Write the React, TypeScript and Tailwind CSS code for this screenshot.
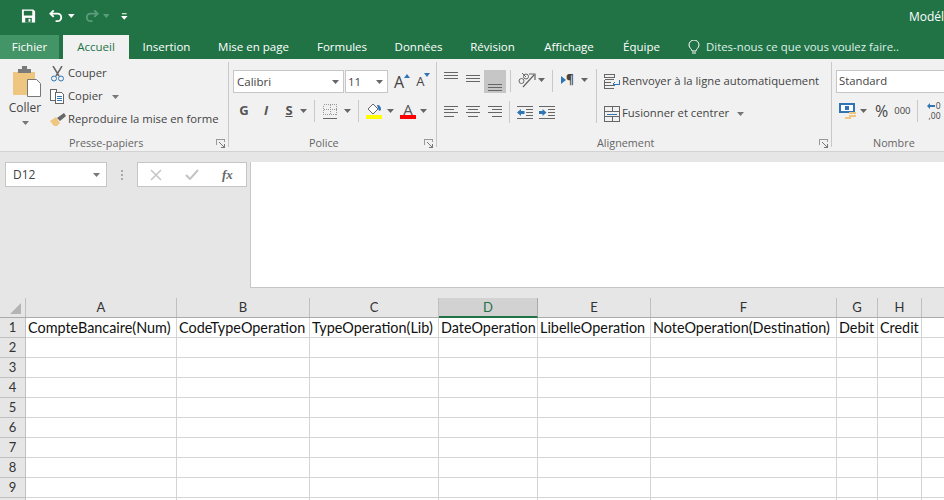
import React from "react";

const Caret = ({ c = "#666", className = "" }: { c?: string; className?: string }) => (
  <svg width="7" height="4" viewBox="0 0 7 4" className={className}><path d="M0 0h7L3.5 4z" fill={c} /></svg>
);
const Lines = ({ d, w = 14, h = 14, className = "" }: { d: string; w?: number; h?: number; className?: string }) => (
  <svg width={w} height={h} viewBox={`0 0 ${w} ${h}`} className={className} shapeRendering="crispEdges"><path d={d} stroke="#666" fill="none" /></svg>
);
const VSep = ({ className = "" }: { className?: string }) => <div className={`w-px bg-[#c8c8c8] ${className}`} />;

const Launcher = () => (
  <svg width="9" height="9" viewBox="0 0 9 9" shapeRendering="crispEdges">
    <path d="M.5 6V.5H8.5V3" stroke="#999" fill="none" /><path d="M3 3l5 5M5 8h3V5" stroke="#777" fill="none" />
  </svg>
);

const tabs = [
  ["Insertion", "w-[75px]"],
  ["Mise en page", "w-[99px]"],
  ["Formules", "w-[78px]"],
  ["Données", "w-[75px]"],
  ["Révision", "w-[73px]"],
  ["Affichage", "w-[80px]"],
  ["Équipe", "w-[65px]"],
];

const colHeads = [
  ["A", "w-[151px]", "CompteBancaire(Num)"],
  ["B", "w-[133px]", "CodeTypeOperation"],
  ["C", "w-[129px]", "TypeOperation(Lib)"],
  ["D", "w-[99px]", "DateOperation"],
  ["E", "w-[113px]", "LibelleOperation"],
  ["F", "w-[186px]", "NoteOperation(Destination)"],
  ["G", "w-[41px]", "Debit"],
  ["H", "w-[44px]", "Credit"],
  ["", "w-[40px]", ""],
];
const rows = [1, 2, 3, 4, 5, 6, 7, 8, 9, 10];

export default function App() {
  return (
    <div className="w-[944px] h-[500px] overflow-hidden bg-white font-['Open_Sans',sans-serif] text-[11.3px] text-[#444]">
      {/* title bar */}
      <div className="h-[34px] bg-[#217346] flex items-center">
        <svg width="16" height="16" viewBox="0 0 16 16" className="ml-[21px] mt-[-3px]">
          <path d="M1 1h12l2 2v12H1z" fill="#fff" /><path d="M3 2.500h9v5H3z" fill="#217346" /><path d="M4.500 10h7v5h-7z" fill="#217346" /><path d="M8 11h2v3H8z" fill="#fff" />
        </svg>
        <svg width="16" height="14" viewBox="0 0 16 14" className="ml-[13px] mt-[-3px]">
          <path d="M5 1L1.500 4.500 5 8M2 4.500h7a4 4 0 0 1 0 8H7" stroke="#fff" strokeWidth="2" fill="none" />
        </svg>
        <Caret c="#fff" className="ml-[4px] mt-[-2px]" />
        <svg width="16" height="14" viewBox="0 0 16 14" className="ml-[9px] mt-[-3px]">
          <path d="M11 1l3.500 3.500L11 8M14 4.500H7a4 4 0 0 0 0 8h2" stroke="#5c9c7c" strokeWidth="2" fill="none" />
        </svg>
        <Caret c="#5c9c7c" className="ml-[4px] mt-[-2px]" />
        <svg width="7" height="7" viewBox="0 0 7 7" className="ml-[12px] mt-[-1px]"><path d="M1 0h5v1H1zM0 3h7L3.500 7z" fill="#fff" /></svg>
        <span className="ml-[781px] mt-[-1px] text-white text-[12px] whitespace-nowrap">Modél</span>
      </div>
      {/* tabs */}
      <div className="h-[25px] bg-[#217346] flex items-end text-white text-[11.5px] whitespace-nowrap">
        <div className="w-[59px] h-[24px] bg-[#439467] flex items-center justify-center">Fichier</div>
        <div className="ml-[4px] w-[66px] h-[24px] bg-[#f1f1f1] text-[#217346] flex items-center justify-center">Accueil</div>
        {tabs.map(([t, w]) => (
          <div key={t} className={`${w} h-[24px] flex items-center justify-center`}>{t}</div>
        ))}
        <div className="h-[24px] flex items-center pl-[14px]">
          <svg width="12" height="15" viewBox="0 0 12 15"><path d="M4 11c0-2-3-3-3-6a5 5 0 0 1 10 0c0 3-3 4-3 6zM4 13h4" stroke="#fff" fill="none" /></svg>
          <span className="ml-[6px] text-[11.400px] text-[#dff0e6]">Dites-nous ce que vous voulez faire..</span>
        </div>
      </div>
      {/* ribbon */}
      <div className="h-[93px] bg-[#f1f1f1] border-b border-[#d2d2d2] flex whitespace-nowrap">
        {/* clipboard */}
        <div className="w-[228px] flex flex-col shrink-0">
          <div className="h-[74px] flex">
            <div className="w-[50px] flex flex-col items-center">
              <svg width="29" height="31" viewBox="0 0 29 31" className="mt-[7px] ml-[4px]">
                <path d="M0 6h22v23H0z" fill="#eec67f" /><path d="M5 3h4V0h5v3h4v4H5z" fill="#7a7a7a" />
                <path d="M14.500 13.500h9l4 4v13h-13z" fill="#fff" stroke="#777" />
              </svg>
              <span className="mt-[3px] text-[12px] leading-[16px]">Coller</span>
              <Caret c="#777" className="mt-[5px]" />
            </div>
            <div className="flex flex-col pt-[3px]">
              <div className="h-[23px] flex items-center">
                <svg width="15" height="16" viewBox="0 0 15 16">
                  <path d="M3 0l6 10M12 0L6 10" stroke="#666" strokeWidth="1.500" />
                  <circle cx="4" cy="12.500" r="2.500" stroke="#2f75b5" fill="none" /><circle cx="11" cy="12.500" r="2.500" stroke="#2f75b5" fill="none" />
                </svg>
                <span className="ml-[3px]">Couper</span>
              </div>
              <div className="h-[23px] flex items-center">
                <svg width="15" height="15" viewBox="0 0 15 15" shapeRendering="crispEdges">
                  <path d="M.5.5h6v11h-6z" fill="#fff" stroke="#666" /><path d="M5.500 3.500h6l2 2v9h-8z" fill="#fff" stroke="#666" />
                  <path d="M7 7h5M7 9h5M7 11h5" stroke="#2f75b5" />
                </svg>
                <span className="ml-[3px]">Copier</span>
                <Caret c="#777" className="ml-[9px]" />
              </div>
              <div className="h-[23px] flex items-center">
                <svg width="16" height="14" viewBox="0 0 16 14"><path d="M0 8l6-4 4 6-3 3H4z" fill="#eec67f" /><path d="M7 5l7-5 2 3-6 5z" fill="#666" /></svg>
                <span className="ml-[2px]">Reproduire la mise en forme</span>
              </div>
            </div>
          </div>
          <div className="flex items-center h-[18px] pt-[2px] pl-[69px] pr-[3px]">
            <span className="text-[#666] text-[10.800px]">Presse-papiers</span>
            <span className="ml-auto flex"><Launcher /></span>
          </div>
        </div>
        <VSep className="h-[85px] mt-[3px] shrink-0" />
        {/* police */}
        <div className="w-[207px] shrink-0 flex flex-col pl-[4px]">
          <div className="h-[74px] flex flex-col pt-[11px]">
            <div className="flex items-center h-[23px]">
              <div className="w-[111px] h-[23px] bg-white border border-[#c6c6c6] flex items-center pl-[3px] pr-[4px] justify-between text-[11.500px]">
                <span>Calibri</span><Caret />
              </div>
              <div className="ml-px w-[43px] h-[23px] bg-white border border-[#c6c6c6] flex items-center pl-[2px] pr-[4px] justify-between text-[11.500px]">
                <span>11</span><Caret />
              </div>
              <span className="ml-[6px] relative text-[16px] leading-none">A<svg width="6" height="4" viewBox="0 0 6 4" className="absolute top-0 left-[10px]"><path d="M0 4h6L3 0z" fill="#2f75b5" /></svg></span>
              <span className="ml-[12px] relative text-[13px] leading-none">A<svg width="6" height="4" viewBox="0 0 6 4" className="absolute top-[-2px] left-[8px]"><path d="M0 0h6L3 4z" fill="#2f75b5" /></svg></span>
            </div>
            <div className="flex items-center h-[24px] mt-[6px]">
              <span className="ml-[5px] font-bold text-[13px] w-[12px] text-center text-[#555]">G</span>
              <span className="ml-[11px] italic font-bold text-[13px] w-[10px] text-center text-[#555]">I</span>
              <span className="ml-[13px] font-bold text-[13px] w-[10px] text-center underline text-[#555]">S</span>
              <Caret className="ml-[6px]" />
              <VSep className="h-[22px] ml-[7px]" />
              <svg width="14" height="15" viewBox="0 0 14 15" className="ml-[8px]" shapeRendering="crispEdges">
                <path d="M.5.5h13v10h-13zM7 .5v10M.5 5.500h13" stroke="#999" strokeDasharray="1 1" fill="none" /><path d="M0 14h14" stroke="#666" />
              </svg>
              <Caret className="ml-[7px]" />
              <VSep className="h-[22px] ml-[7px]" />
              <div className="ml-[7px] flex flex-col items-center w-[16px]">
                <svg width="16" height="12" viewBox="0 0 16 12"><path d="M2 6l5-5 5 5-5 5z" fill="#fff" stroke="#666" /><path d="M11 2c3 0 4 2 4 5l-2 1z" fill="#2f75b5" /></svg>
                <div className="w-[16px] h-[4px] bg-[#ffff00]" />
              </div>
              <Caret className="ml-[5px]" />
              <div className="ml-[6px] flex flex-col items-center w-[16px]">
                <span className="text-[15px] leading-[12px] text-[#555]">A</span>
                <div className="w-[16px] h-[4px] bg-[#ff0000]" />
              </div>
              <Caret className="ml-[4px]" />
            </div>
          </div>
          <div className="flex items-center h-[18px] pt-[2px] pr-[3px]">
            <span className="ml-[76px] text-[#666] text-[10.800px]">Police</span>
            <span className="ml-auto flex"><Launcher /></span>
          </div>
        </div>
        <VSep className="h-[85px] mt-[3px] shrink-0" />
        {/* alignement */}
        <div className="w-[394px] shrink-0 flex flex-col">
          <div className="h-[74px] flex">
            <div className="w-[159px] flex flex-col pt-[11px] pl-[7px]">
              <div className="flex items-start h-[23px]">
                <Lines className="mt-[2px]" d="M0 .5h14M0 3.500h14M0 6.500h14" />
                <Lines className="ml-[8px] mt-[5px]" d="M0 .5h14M0 3.500h14M0 6.500h14" />
                <div className="ml-[4px] w-[22px] h-[23px] bg-[#c6c6c6] flex items-end justify-center pb-[2px]">
                  <Lines h={7} d="M0 .5h14M0 3.500h14M0 6.500h14" />
                </div>
                <VSep className="h-[22px] ml-[4px]" />
                <svg width="18" height="16" viewBox="0 0 18 16" className="ml-[7px] mt-[2px]">
                  <path d="M5 15L16 3M11 2h6v6" stroke="#666" fill="none" strokeWidth="1.200" />
                  <circle cx="3.500" cy="9" r="2.500" fill="none" stroke="#666" /><circle cx="8" cy="4.500" r="2.500" fill="none" stroke="#666" /><path d="M4 1l4 4" stroke="#666" />
                </svg>
                <Caret className="ml-[2px] mt-[8px]" />
                <VSep className="h-[22px] ml-[7px]" />
                <span className="ml-[8px] flex items-center h-[20px] text-[12px] font-bold leading-none">
                  <svg width="5" height="8" viewBox="0 0 5 8"><path d="M0 0l5 4-5 4z" fill="#2f75b5" /></svg>¶
                </span>
                <Caret className="ml-[7px] mt-[8px]" />
              </div>
              <div className="flex items-center h-[14px] mt-[12px]">
                <Lines h={12} d="M0 .5h14M0 3.500h10M0 6.500h14M0 10.500h10" />
                <Lines h={12} className="ml-[8px]" d="M0 .5h14M2 3.500h10M0 6.500h14M2 10.500h10" />
                <Lines h={12} className="ml-[8px]" d="M0 .5h14M4 3.500h10M0 6.500h14M4 10.500h10" />
                <VSep className="h-[22px] ml-[7px]" />
                <svg width="16" height="13" viewBox="0 0 16 13" className="ml-[7px]">
                  <path d="M0 .5h16M9 3.500h7M9 6.500h7M9 9.500h7M0 12.500h16" stroke="#666" /><path d="M0 6.500l4-3.500v2h3.500v3H4v2z" fill="#2f75b5" />
                </svg>
                <svg width="16" height="13" viewBox="0 0 16 13" className="ml-[6px]">
                  <path d="M0 .5h16M9 3.500h7M9 6.500h7M9 9.500h7M0 12.500h16" stroke="#666" /><path d="M7.500 6.500l-4-3.500v2H0v3h3.500v2z" fill="#2f75b5" />
                </svg>
              </div>
            </div>
            <VSep className="h-[54px] mt-[10px]" />
            <div className="flex flex-col pt-[11px] pl-[7px]">
              <div className="h-[23px] flex items-center">
                <svg width="16" height="15" viewBox="0 0 16 15" shapeRendering="crispEdges">
                  <path d="M.5.5h10v3H.5zM.5 5.500h9M.5 8.500h6M.5 11.500h9M.5 5.500v9h9" stroke="#666" fill="none" /><path d="M15 6v4H9M11 8l-2 2 2 2" stroke="#2f75b5" fill="none" />
                </svg>
                <span className="ml-[2px]">Renvoyer à la ligne automatiquement</span>
              </div>
              <div className="h-[23px] flex items-center mt-[9px]">
                <svg width="16" height="16" viewBox="0 0 16 16" shapeRendering="crispEdges">
                  <path d="M.5.5h15v15H.5zM.5 5.500h15M.5 10.500h15M8 .5v5M8 10.500v5" stroke="#666" fill="none" /><path d="M3 8h10" stroke="#2f75b5" />
                </svg>
                <span className="ml-[2px]">Fusionner et centrer</span>
                <Caret className="ml-[8px]" c="#777" />
              </div>
            </div>
          </div>
          <div className="flex items-center h-[18px] pt-[2px] pr-[3px]">
            <span className="ml-[160px] text-[#666] text-[10.800px]">Alignement</span>
            <span className="ml-auto flex"><Launcher /></span>
          </div>
        </div>
        <VSep className="h-[85px] mt-[3px] shrink-0" />
        {/* nombre */}
        <div className="flex-1 flex flex-col pl-[4px] overflow-hidden">
          <div className="h-[74px] flex flex-col pt-[11px]">
            <div className="w-[120px] h-[23px] bg-white border border-[#c6c6c6] flex items-center pl-[2px] shrink-0">Standard</div>
            <div className="flex items-center h-[24px] mt-[6px]">
              <svg width="17" height="16" viewBox="0 0 17 16" className="ml-[3px]" shapeRendering="crispEdges">
                <path d="M0 0h16v10H0z" fill="#2f75b5" /><path d="M2 2h12v6H2z" fill="#fff" /><path d="M6 3h4v4H6z" fill="#2f75b5" /><path d="M10 9h7v2h-7zM10 12h7v2h-7zM6 14h6v2H6z" fill="#eec67f" />
              </svg>
              <Caret className="ml-[4px]" />
              <span className="ml-[8px] text-[16px] leading-none">%</span>
              <span className="ml-[6px] text-[9.500px]">000</span>
              <VSep className="h-[22px] ml-[6px]" />
              <div className="ml-[7px] flex flex-col items-end w-[16px] text-[8.500px]">
                <div className="h-[10px] leading-[10px] flex items-center">
                  <svg width="8" height="6" viewBox="0 0 8 6" className="mr-px"><path d="M0 3l3-3v2h5v2H3v2z" fill="#2f75b5" /></svg>
                  <span>0</span>
                </div>
                <span className="h-[10px] leading-[10px]">,00</span>
              </div>
            </div>
          </div>
          <div className="h-[18px] pt-[2px] flex items-center">
            <span className="ml-[37px] text-[#666] text-[10.800px]">Nombre</span>
          </div>
        </div>
      </div>
      {/* formula bar */}
      <div className="h-[146px] bg-[#e6e6e6] pt-[10px] flex items-start">
        <div className="ml-[5px] w-[102px] h-[25px] bg-white border border-[#c6c6c6] flex items-center justify-between pl-[7px] pr-[6px] text-[12px]">
          <span>D12</span><Caret c="#777" />
        </div>
        <div className="w-[30px] h-[25px] flex flex-col items-center justify-center gap-[2px]">
          <i className="w-[2px] h-[2px] bg-[#aaa]" /><i className="w-[2px] h-[2px] bg-[#aaa]" /><i className="w-[2px] h-[2px] bg-[#aaa]" />
        </div>
        <div className="w-[110px] h-[25px] bg-white border border-[#c6c6c6] flex items-center">
          <svg width="12" height="12" viewBox="0 0 12 12" className="ml-[12px]"><path d="M1 1l10 10M11 1L1 11" stroke="#c4c4c4" strokeWidth="1.500" /></svg>
          <svg width="14" height="11" viewBox="0 0 14 11" className="ml-[23px]"><path d="M1 6l4 4 8-9" stroke="#c4c4c4" strokeWidth="2" fill="none" /></svg>
          <span className="ml-[23px] italic text-[13px] leading-none font-['Liberation_Serif',serif] font-bold text-[#666]">fx</span>
        </div>
        <div className="ml-[3px] flex-1 h-[126px] bg-white border-l border-b border-[#c6c6c6]" />
      </div>
      {/* sheet */}
      <div className="font-['Lato',sans-serif]">
        <div className="flex h-[20px] bg-[#e6e6e6] text-[13px] text-[#333] border-b border-[#ababab]">
          <div className="w-[26px] shrink-0 border-r border-[#c0c0c0] flex items-center justify-center pl-[6px] pt-[1px]">
            <svg width="11" height="11" viewBox="0 0 11 11"><path d="M11 0v11H0z" fill="#b4b4b4" /></svg>
          </div>
          {colHeads.map(([l, w]) => (
            <div key={w} className={`${w} shrink-0 border-r flex items-center justify-center pt-[1px] ${l === "D" ? "bg-[#d2d2d2] text-[#217346] border-[#ababab] border-b-2 border-b-[#217346] h-[20px]" : "border-[#c0c0c0]"}`}>{l}</div>
          ))}
        </div>
        {rows.map((r) => (
          <div key={r} className="flex h-[20px] text-[14.400px] text-[#111]">
            <div className="w-[26px] shrink-0 bg-[#e6e6e6] border-r border-b border-[#c0c0c0] flex items-center justify-center pt-[1px] text-[13px] text-[#333]">{r < 10 ? r : ""}</div>
            {colHeads.map(([l, w, t]) => (
              <div key={w} className={`${w} shrink-0 border-r border-b border-[#d4d4d4] flex items-center pl-[2px] whitespace-nowrap`}>{r === 1 ? t : ""}</div>
            ))}
          </div>
        ))}
      </div>
    </div>
  );
}
